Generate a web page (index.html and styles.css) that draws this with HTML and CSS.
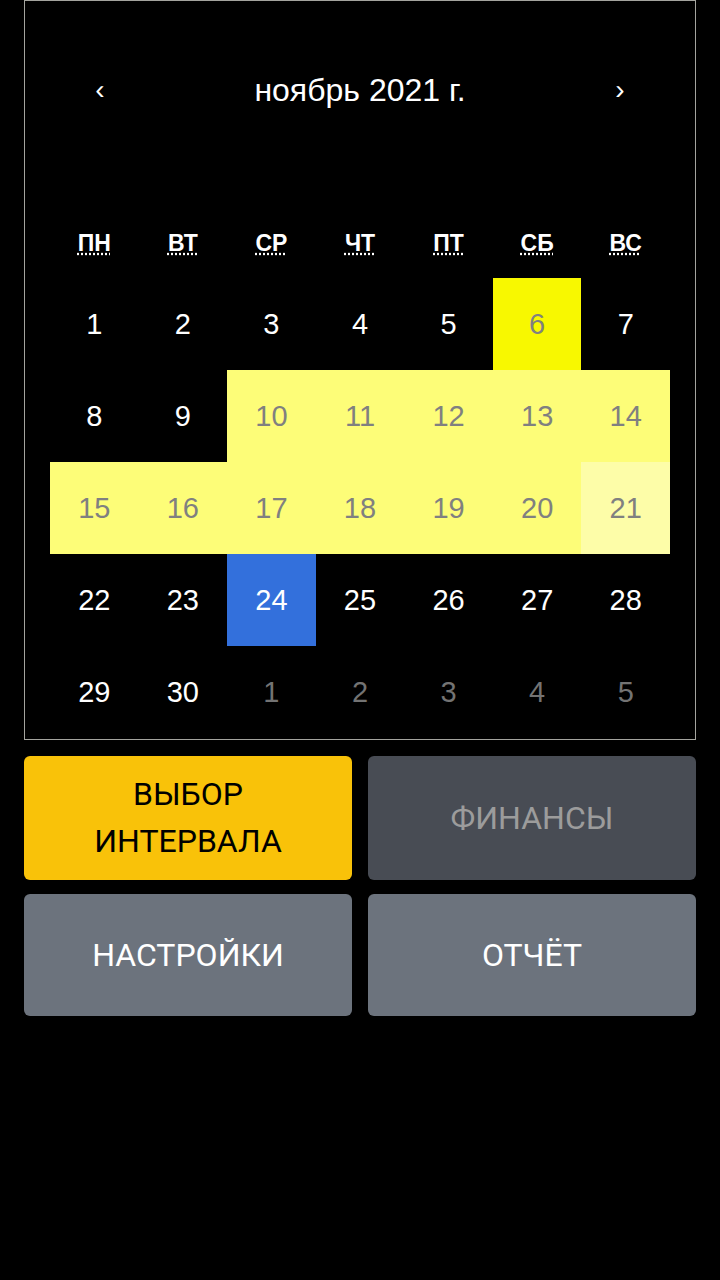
FILE: index.html
```html
<!DOCTYPE html>
<html lang="ru">
<head>
<meta charset="utf-8">
<link rel="stylesheet" href="styles.css">
</head>
<body>
<div class="calendar">
  <div class="nav">
    <button class="nav-btn">‹</button>
    <span class="nav-label">ноябрь 2021 г.</span>
    <button class="nav-btn">›</button>
  </div>
  <div class="weekdays">
    <div class="wd"><abbr title="понедельник">ПН</abbr></div>
    <div class="wd"><abbr title="вторник">ВТ</abbr></div>
    <div class="wd"><abbr title="среда">СР</abbr></div>
    <div class="wd"><abbr title="четверг">ЧТ</abbr></div>
    <div class="wd"><abbr title="пятница">ПТ</abbr></div>
    <div class="wd"><abbr title="суббота">СБ</abbr></div>
    <div class="wd"><abbr title="воскресенье">ВС</abbr></div>
  </div>
  <div class="days">
    <div class="day">1</div>
    <div class="day">2</div>
    <div class="day">3</div>
    <div class="day">4</div>
    <div class="day">5</div>
    <div class="day start">6</div>
    <div class="day">7</div>
    <div class="day">8</div>
    <div class="day">9</div>
    <div class="day range">10</div>
    <div class="day range">11</div>
    <div class="day range">12</div>
    <div class="day range">13</div>
    <div class="day range">14</div>
    <div class="day range">15</div>
    <div class="day range">16</div>
    <div class="day range">17</div>
    <div class="day range">18</div>
    <div class="day range">19</div>
    <div class="day range">20</div>
    <div class="day end">21</div>
    <div class="day">22</div>
    <div class="day">23</div>
    <div class="day today">24</div>
    <div class="day">25</div>
    <div class="day">26</div>
    <div class="day">27</div>
    <div class="day">28</div>
    <div class="day">29</div>
    <div class="day">30</div>
    <div class="day other">1</div>
    <div class="day other">2</div>
    <div class="day other">3</div>
    <div class="day other">4</div>
    <div class="day other">5</div>
  </div>
</div>
<div class="actions">
  <button class="btn btn-yellow">ВЫБОР<br>ИНТЕРВАЛА</button>
  <button class="btn btn-dark">ФИНАНСЫ</button>
  <button class="btn btn-gray">НАСТРОЙКИ</button>
  <button class="btn btn-gray">ОТЧЁТ</button>
</div>
</body>
</html>
```
FILE: styles.css
```css
html, body {
  margin: 0;
  padding: 0;
  background: #000;
}
body {
  width: 720px;
  height: 1280px;
  font-family: "Liberation Sans", Arial, sans-serif;
  color: #fff;
}
.calendar {
  margin: 0 24px;
  border: 1px solid #a4a49e;
  padding: 59px 25px 1px;
}
.nav {
  display: flex;
  align-items: center;
  height: 60px;
}
.nav-btn {
  width: 100px;
  height: 60px;
  background: none;
  border: 0;
  color: #fff;
  font-family: "Liberation Sans", Arial, sans-serif;
  font-size: 28px;
  padding: 0;
}
.nav-label {
  flex: 1;
  text-align: center;
  font-size: 32px;
}
.weekdays {
  margin-top: 103px;
  display: grid;
  grid-template-columns: repeat(7, 1fr);
  height: 40px;
  align-items: center;
}
.wd {
  text-align: center;
  font-size: 23px;
  font-weight: bold;
}
.wd abbr {
  text-decoration: underline dotted;
  text-underline-offset: 3px;
}
.days {
  margin-top: 15px;
  display: grid;
  grid-template-columns: repeat(7, 1fr);
  grid-auto-rows: 92px;
}
.day {
  display: flex;
  align-items: center;
  justify-content: center;
  font-size: 29px;
  color: #fff;
}
.day.start {
  background: #f8f800;
  color: #808080;
}
.day.range {
  background: #fdfd78;
  color: #808080;
}
.day.end {
  background: #fdfda8;
  color: #808080;
}
.day.today {
  background: #3370dc;
  color: #fff;
}
.day.other {
  color: #737373;
}
.actions {
  margin: 16px 24px 0;
  display: grid;
  grid-template-columns: 1fr 1fr;
  grid-template-rows: 124px 122px;
  gap: 14px 16px;
}
.btn {
  border: 0;
  border-radius: 6px;
  font-family: Roboto, "Liberation Sans", sans-serif;
  font-size: 32px;
  line-height: 47px;
  padding: 0;
}
.btn-yellow {
  background: #f9c209;
  color: #000;
}
.btn-dark {
  background: #484c54;
  color: #9c9c9c;
}
.btn-gray {
  background: #6c737d;
  color: #fff;
}
```
